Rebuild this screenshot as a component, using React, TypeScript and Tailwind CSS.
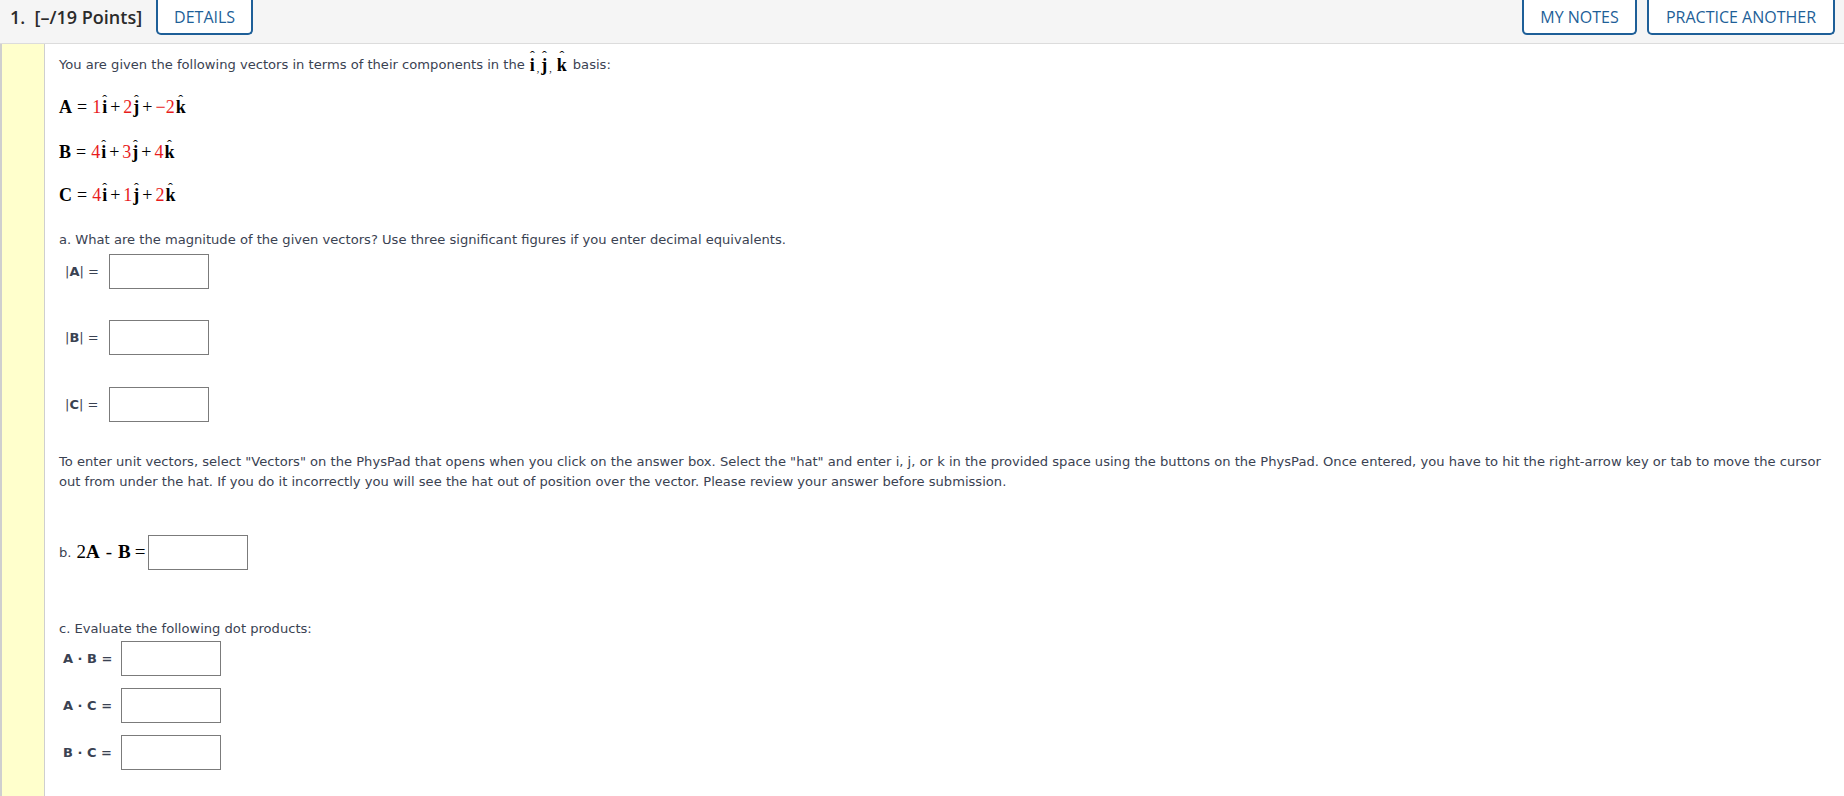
import React from 'react';

const sans = "font-['DejaVu_Sans','Verdana',sans-serif]";
const serif = "font-['Liberation_Serif','Times_New_Roman',serif]";

function Hat({ c }: { c: string }) {
  return (
    <span className="relative inline-block font-bold">
      {c}
      <span className="absolute left-0 right-0 -top-[0.36em] text-center font-normal text-[0.8em]">ˆ</span>
    </span>
  );
}

function Red({ children }: { children: React.ReactNode }) {
  return <span className="text-[#e81c1c]">{children}</span>;
}

function Vec({ name, x, y, z }: { name: string; x: string; y: string; z: string }) {
  return (
    <div className={`${serif} h-[24px] flex items-center text-[18px] text-black leading-none`}>
      <span className="font-bold">{name}</span>
      <span className="mx-[5px]">=</span>
      <Red>{x}</Red>
      <span className="ml-[1px]"><Hat c="i" /></span>
      <span className="mx-[3px]">+</span>
      <Red>{y}</Red>
      <span className="ml-[1px]"><Hat c="j" /></span>
      <span className="mx-[3px]">+</span>
      <Red>{z}</Red>
      <span className="ml-[1px]"><Hat c="k" /></span>
    </div>
  );
}

function Box() {
  return <div className="w-[100px] h-[35px] border border-[#7b7b7b] bg-white" />;
}

function MagRow({ v, mt }: { v: string; mt: string }) {
  return (
    <div className={`flex items-center h-[35px] ${mt}`}>
      <span className="w-[44px] ml-[6px] text-[13px]">
        |<b>{v}</b>| =
      </span>
      <Box />
    </div>
  );
}

function DotRow({ a, b, mt }: { a: string; b: string; mt: string }) {
  return (
    <div className={`flex items-center h-[35px] ${mt}`}>
      <span className="w-[58px] ml-[4px] text-[13px] font-bold">
        {a} · {b} =
      </span>
      <Box />
    </div>
  );
}

export default function App() {
  return (
    <div className={`w-[1844px] min-h-[796px] bg-white flex flex-col ${sans} text-[#3a4252]`}>
      {/* question header */}
      <div className="h-[44px] bg-[#f5f5f5] border-b border-[#dcdcdc] flex items-start font-['Open_Sans',sans-serif]">
        <div className="h-[35px] flex items-center pl-[10px] pr-[14px] text-[18px] font-semibold text-[#2b2b2b]">
          1.&nbsp; [–/19 Points]
        </div>
        <button className="h-[35px] px-[16px] border-2 border-t-0 border-[#1e5f98] rounded-b-[5px] text-[16px] text-[#1e5f98] bg-white">
          DETAILS
        </button>
        <div className="flex-1" />
        <button className="h-[35px] w-[115px] border-2 border-t-0 border-[#1e5f98] rounded-b-[5px] text-[16px] text-[#1e5f98] bg-white">
          MY NOTES
        </button>
        <button className="h-[35px] w-[188px] ml-[10px] mr-[9px] border-2 border-t-0 border-[#1e5f98] rounded-b-[5px] text-[16px] text-[#1e5f98] bg-white">
          PRACTICE ANOTHER
        </button>
      </div>

      <div className="flex flex-1">
        <div className="w-[45px] bg-[#ffffcc] border-l-2 border-r border-[#cfcfcf]" />
        <div className="flex-1 pl-[14px] pb-[26px] text-[13.1px]">
          <div className="mt-[11px] h-[20px] flex items-center whitespace-nowrap">
            You are given the following vectors in terms of their components in the
            <span className={`${serif} text-[18px] text-black ml-[5px] mr-[6px] flex items-center`}>
              <Hat c="i" />
              <span className="text-[10px] mx-[2px] mt-[6px]">,</span>
              <Hat c="j" />
              <span className="text-[10px] ml-[2px] mr-[5px] mt-[6px]">,</span>
              <Hat c="k" />
            </span>
            basis:
          </div>

          <div className="mt-[20px]">
            <Vec name="A" x="1" y="2" z="−2" />
          </div>
          <div className="mt-[21px]">
            <Vec name="B" x="4" y="3" z="4" />
          </div>
          <div className="mt-[19px]">
            <Vec name="C" x="4" y="1" z="2" />
          </div>

          <div className="mt-[23px] h-[20px] flex items-center">
            a. What are the magnitude of the given vectors? Use three significant figures if you enter decimal equivalents.
          </div>
          <MagRow v="A" mt="mt-[4px]" />
          <MagRow v="B" mt="mt-[31px]" />
          <MagRow v="C" mt="mt-[32px]" />

          <div className="mt-[30px] leading-[20px] whitespace-nowrap">
            To enter unit vectors, select "Vectors" on the PhysPad that opens when you click on the answer box. Select the "hat" and enter i, j, or k in the provided space using the buttons on the PhysPad. Once entered, you have to hit the right-arrow key or tab to move the cursor
            <br />
            out from under the hat. If you do it incorrectly you will see the hat out of position over the vector. Please review your answer before submission.
          </div>

          <div className="mt-[43px] flex items-center h-[35px]">
            <span>b.</span>
            <span className={`${serif} text-[19px] text-black ml-[5px] flex items-center`}>
              <span>2<b>A</b></span>
              <span className="mx-[6px]">-</span>
              <b>B</b>
              <span className="ml-[4px]">=</span>
            </span>
            <div className="ml-[3px]">
              <Box />
            </div>
          </div>

          <div className="mt-[49px] h-[20px] flex items-center">c. Evaluate the following dot products:</div>
          <DotRow a="A" b="B" mt="mt-[2px]" />
          <DotRow a="A" b="C" mt="mt-[12px]" />
          <DotRow a="B" b="C" mt="mt-[12px]" />
        </div>
      </div>
    </div>
  );
}
